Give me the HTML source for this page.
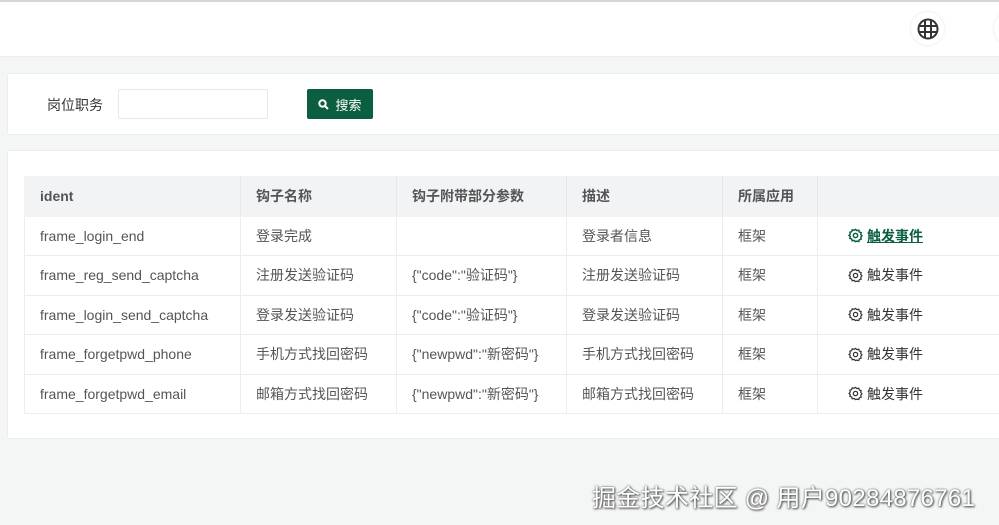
<!DOCTYPE html>
<html><head><meta charset="utf-8"><style>
*{box-sizing:border-box;margin:0;padding:0}
body{width:999px;height:525px;overflow:hidden;background:#f4f6f6;font-family:"Liberation Sans","Noto Sans CJK SC",sans-serif;font-size:14px;color:#555;position:relative}
.top{position:absolute;left:0;top:0;width:999px;height:57px;background:#fff;border-top:2px solid #d6d6d6;border-bottom:1px solid #eceeee}
.globe{position:absolute;left:911px;top:12px;width:33px;height:33px;border-radius:50%;background:#fff;box-shadow:0 0 3px #e3e3e3;display:flex;align-items:center;justify-content:center}
.g2{position:absolute;left:994px;top:12px;width:33px;height:33px;border-radius:50%;background:#fff;box-shadow:0 0 3px #e3e3e3}
.card{position:absolute;left:7px;width:1000px;background:#fff;border:1px solid #ebeded;border-radius:3px}
.lbl{position:absolute;left:39px;top:21px;color:#333}
.inp{position:absolute;left:110px;top:15px;width:150px;height:30px;border:1px solid #e8e8e8;border-radius:2px}
.btn{position:absolute;left:299px;top:15px;width:66px;height:30px;background:#0b5e3f;color:#fff;font-size:13px;display:flex;align-items:center;justify-content:center;gap:6px;border-radius:2px}
table{position:absolute;left:16px;top:25px;border-collapse:collapse;width:990px}
td,th{height:39.5px;border:1px solid #eceeee;text-align:left;padding-left:15px;font-weight:normal;white-space:nowrap}
th{background:#f2f3f5;font-weight:bold;color:#555;border-color:#f2f3f5;border-right-color:#e6e8e8}
.op{color:#333;display:flex;align-items:center;gap:4px;padding-left:0}
.wm{position:absolute;left:592px;top:478px;font-size:24px;color:#fff;text-shadow:0 0 2px #555,1px 1px 2px #444;letter-spacing:0.3px}
</style></head><body>
<div class="top"></div>
<div class="globe"><svg width="22" height="22" viewBox="0 0 22 22" fill="none" stroke="#333" stroke-width="2"><circle cx="11" cy="11" r="9.5"/><line x1="8" y1="2" x2="8" y2="20"/><line x1="14" y1="2" x2="14" y2="20"/><line x1="2" y1="8" x2="20" y2="8"/><line x1="2" y1="14" x2="20" y2="14"/></svg></div>
<div class="g2"></div>
<div class="card" style="top:73px;height:62px">
<div class="lbl">岗位职务</div><div class="inp"></div>
<div class="btn"><svg width="11" height="11" viewBox="0 0 11 11" fill="none" stroke="#fff" stroke-width="2"><circle cx="4.5" cy="4.5" r="3.2"/><line x1="7" y1="7" x2="10" y2="10"/></svg>搜索</div>
</div>
<div class="card" style="top:150px;height:289px">
<table>
<tr><th style="width:216px">ident</th><th style="width:156px">钩子名称</th><th style="width:170px">钩子附带部分参数</th><th style="width:156px">描述</th><th style="width:95px">所属应用</th><th></th></tr>
<tr><td>frame_login_end</td><td>登录完成</td><td></td><td>登录者信息</td><td>框架</td><td style="padding-left:30px"><span class="op" style="color:#0b5e3f;font-weight:bold;text-decoration:underline"><svg width="15" height="15" viewBox="0 0 16 16" fill="none" stroke="#0b5e3f" stroke-width="1.6"><path d="M8 1.5l1.5 1.3 2-.4.6 1.9 1.9.6-.4 2 1.3 1.5-1.3 1.5.4 2-1.9.6-.6 1.9-2-.4L8 14.5l-1.5-1.3-2 .4-.6-1.9-1.9-.6.4-2L1.100 8l1.3-1.5-.4-2 1.9-.6.6-1.9 2 .4z"/><circle cx="8" cy="8" r="2.3"/></svg>触发事件</span></td></tr>
<tr><td>frame_reg_send_captcha</td><td>注册发送验证码</td><td>{"code":"验证码"}</td><td>注册发送验证码</td><td>框架</td><td style="padding-left:30px"><span class="op"><svg width="15" height="15" viewBox="0 0 16 16" fill="none" stroke="#333" stroke-width="1.3"><path d="M8 1.5l1.5 1.3 2-.4.6 1.9 1.9.6-.4 2 1.3 1.5-1.3 1.5.4 2-1.9.6-.6 1.9-2-.4L8 14.5l-1.5-1.3-2 .4-.6-1.9-1.9-.6.4-2L1.1 8l1.3-1.5-.4-2 1.9-.6.6-1.9 2 .4z"/><circle cx="8" cy="8" r="2.3"/></svg>触发事件</span></td></tr>
<tr><td>frame_login_send_captcha</td><td>登录发送验证码</td><td>{"code":"验证码"}</td><td>登录发送验证码</td><td>框架</td><td style="padding-left:30px"><span class="op"><svg width="15" height="15" viewBox="0 0 16 16" fill="none" stroke="#333" stroke-width="1.3"><path d="M8 1.5l1.5 1.3 2-.4.6 1.9 1.9.6-.4 2 1.3 1.5-1.3 1.5.4 2-1.9.6-.6 1.9-2-.4L8 14.5l-1.5-1.3-2 .4-.6-1.9-1.9-.6.4-2L1.1 8l1.3-1.5-.4-2 1.9-.6.6-1.9 2 .4z"/><circle cx="8" cy="8" r="2.3"/></svg>触发事件</span></td></tr>
<tr><td>frame_forgetpwd_phone</td><td>手机方式找回密码</td><td>{"newpwd":"新密码"}</td><td>手机方式找回密码</td><td>框架</td><td style="padding-left:30px"><span class="op"><svg width="15" height="15" viewBox="0 0 16 16" fill="none" stroke="#333" stroke-width="1.3"><path d="M8 1.5l1.5 1.3 2-.4.6 1.9 1.9.6-.4 2 1.3 1.5-1.3 1.5.4 2-1.9.6-.6 1.9-2-.4L8 14.5l-1.5-1.3-2 .4-.6-1.9-1.9-.6.4-2L1.1 8l1.3-1.5-.4-2 1.9-.6.6-1.9 2 .4z"/><circle cx="8" cy="8" r="2.3"/></svg>触发事件</span></td></tr>
<tr><td>frame_forgetpwd_email</td><td>邮箱方式找回密码</td><td>{"newpwd":"新密码"}</td><td>邮箱方式找回密码</td><td>框架</td><td style="padding-left:30px"><span class="op"><svg width="15" height="15" viewBox="0 0 16 16" fill="none" stroke="#333" stroke-width="1.3"><path d="M8 1.5l1.5 1.3 2-.4.6 1.9 1.9.6-.4 2 1.3 1.5-1.3 1.5.4 2-1.9.6-.6 1.9-2-.4L8 14.5l-1.5-1.3-2 .4-.6-1.9-1.9-.6.4-2L1.1 8l1.3-1.5-.4-2 1.9-.6.6-1.9 2 .4z"/><circle cx="8" cy="8" r="2.3"/></svg>触发事件</span></td></tr>
</table>
</div>
<div class="wm">掘金技术社区 @ 用户90284876761</div>
</body></html>
